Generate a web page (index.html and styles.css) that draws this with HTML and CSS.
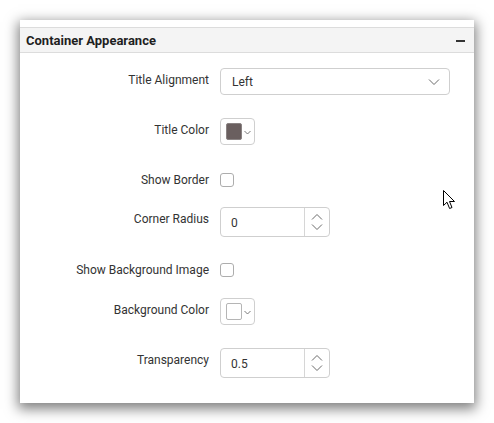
FILE: index.html
```html
<!DOCTYPE html>
<html>
<head>
<meta charset="utf-8">
<link rel="stylesheet" href="styles.css">
</head>
<body>
<div class="panel">
  <div class="header">
    <span class="title">Container Appearance</span>
    <span class="minus"></span>
  </div>
  <div class="body">
    <div class="row mt15">
      <div class="label">Title Alignment</div>
      <div class="select">
        <span class="value">Left</span>
        <svg class="chev" width="12" height="8" viewBox="0 0 12 8"><path d="M1 1.5 L6 6.5 L11 1.5" fill="none" stroke="#6b6b6b" stroke-width="1"/></svg>
      </div>
    </div>
    <div class="row mt23">
      <div class="label">Title Color</div>
      <div class="picker">
        <span class="swatch dark"></span>
        <svg class="mini" width="7" height="5" viewBox="0 0 7 5"><path d="M0.5 1 L3.5 4 L6.5 1" fill="none" stroke="#6b6b6b" stroke-width="0.9"/></svg>
      </div>
    </div>
    <div class="row check mt27">
      <div class="label">Show Border</div>
      <span class="box"></span>
    </div>
    <div class="row mt19">
      <div class="label">Corner Radius</div>
      <div class="numeric">
        <span class="value">0</span>
        <span class="spin">
          <svg width="12" height="8" viewBox="0 0 12 8"><path d="M1 6.5 L6 1.5 L11 6.5" fill="none" stroke="#6b6b6b" stroke-width="1"/></svg>
          <svg width="12" height="8" viewBox="0 0 12 8"><path d="M1 1.5 L6 6.5 L11 1.5" fill="none" stroke="#6b6b6b" stroke-width="1"/></svg>
        </span>
      </div>
    </div>
    <div class="row check mt25">
      <div class="label">Show Background Image</div>
      <span class="box"></span>
    </div>
    <div class="row mt20">
      <div class="label">Background Color</div>
      <div class="picker">
        <span class="swatch light"></span>
        <svg class="mini" width="7" height="5" viewBox="0 0 7 5"><path d="M0.5 1 L3.5 4 L6.5 1" fill="none" stroke="#6b6b6b" stroke-width="0.9"/></svg>
      </div>
    </div>
    <div class="row mt23">
      <div class="label">Transparency</div>
      <div class="numeric">
        <span class="value">0.5</span>
        <span class="spin">
          <svg width="12" height="8" viewBox="0 0 12 8"><path d="M1 6.5 L6 1.5 L11 6.5" fill="none" stroke="#6b6b6b" stroke-width="1"/></svg>
          <svg width="12" height="8" viewBox="0 0 12 8"><path d="M1 1.5 L6 6.5 L11 1.5" fill="none" stroke="#6b6b6b" stroke-width="1"/></svg>
        </span>
      </div>
    </div>
  </div>
  <svg class="cursor" width="14" height="20" viewBox="0 0 14 20"><path d="M0.5 0.5 L0.5 15.5 L4 12.2 L6.6 18.5 L9 17.5 L6.5 11.5 L11.5 11.5 Z" fill="#fff" stroke="#000" stroke-width="1" stroke-linejoin="miter"/></svg>
</div>
</body>
</html>
```
FILE: styles.css
```css
html, body {
  margin: 0;
  padding: 0;
  background: #ffffff;
}
body {
  padding: 20px;
  font-family: Roboto, "Liberation Sans", Arial, sans-serif;
  color: #333333;
}
.panel {
  position: relative;
  width: 454px;
  height: 383px;
  background: #fff;
  box-shadow: 0 4px 12px 2px rgba(0, 0, 0, 0.5);
  padding-top: 7px;
  box-sizing: border-box;
}
.header {
  height: 24px;
  border-top: 1px solid #dcdcdc;
  border-bottom: 1px solid #dcdcdc;
  background: #f4f4f4;
  display: flex;
  align-items: center;
  justify-content: space-between;
  padding: 0 9px 0 6px;
}
.title {
  font-size: 13px;
  font-weight: 700;
  color: #1f1f1f;
}
.minus {
  width: 9px;
  height: 2px;
  background: #333333;
  margin-top: 1px;
}
.body {
  display: flex;
  flex-direction: column;
}
.row {
  display: flex;
  align-items: flex-start;
}
.mt15 { margin-top: 15px; }
.mt19 { margin-top: 19px; }
.mt20 { margin-top: 20px; }
.mt23 { margin-top: 23px; }
.mt25 { margin-top: 25px; }
.mt27 { margin-top: 27px; }
.label {
  width: 189px;
  text-align: right;
  font-size: 12px;
  line-height: 16px;
  padding-top: 4px;
  margin-right: 11px;
  color: #333333;
}
.check .label {
  padding-top: 0;
}
.select {
  width: 230px;
  height: 27px;
  box-sizing: border-box;
  border: 1px solid #cfcfcf;
  border-radius: 4px;
  display: flex;
  align-items: center;
  justify-content: space-between;
  padding: 1px 9px 0 11px;
}
.value {
  font-size: 12px;
  color: #333333;
}
.picker {
  width: 35px;
  height: 27px;
  box-sizing: border-box;
  border: 1px solid #cfcfcf;
  border-radius: 4px;
  display: flex;
  align-items: center;
  padding-left: 5px;
}
.swatch {
  width: 16px;
  height: 17px;
  box-sizing: border-box;
  border-radius: 2px;
  border: 1px solid #a9a9a9;
}
.swatch.dark {
  background: #6a5f5f;
  border-color: #8a8383;
}
.swatch.light {
  background: #fff;
  border-color: #b5b5b5;
}
.mini {
  margin-left: 2px;
  margin-top: 1px;
}
.box {
  width: 14px;
  height: 14px;
  box-sizing: border-box;
  border: 1px solid #adadad;
  border-radius: 3px;
  margin-top: 1px;
  background: #fff;
}
.numeric {
  width: 110px;
  height: 30px;
  box-sizing: border-box;
  border: 1px solid #cfcfcf;
  border-radius: 4px;
  display: flex;
  align-items: center;
}
.numeric .value {
  flex: 1;
  padding-left: 10px;
  padding-top: 1px;
}
.spin {
  width: 24px;
  height: 100%;
  border-left: 1px solid #d6d6d6;
  display: flex;
  flex-direction: column;
  align-items: center;
  justify-content: center;
  gap: 2px;
}
.cursor {
  position: absolute;
  left: 423px;
  top: 170px;
}
```
